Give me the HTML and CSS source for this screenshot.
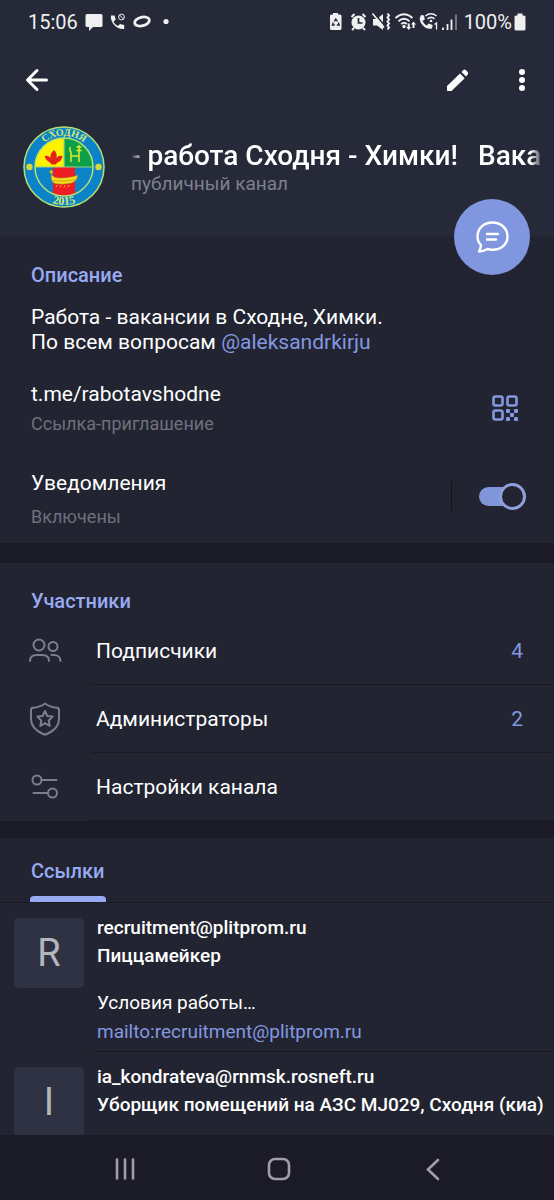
FILE: index.html
```html
<!DOCTYPE html>
<html lang="ru">
<head>
    <meta charset="UTF-8">
    <meta name="viewport" content="width=device-width, initial-scale=1.0">
    <title>Работа Сходня - Химки!</title>
    <link rel="stylesheet" href="styles.css">
</head>
<body>
    <header class="header">
        <div class="status-bar">
            <span class="status-time">15:06</span>
            <svg class="status-left" width="90" height="20" viewBox="0 0 90 20" fill="#f0f0f0">
                <path d="M2 2h14q1.500 0 1.500 1.500v10q0 1.500-1.500 1.500H8l-4 4v-4H2Q.5 15 .5 13.500v-10Q.5 2 2 2z"/>
                <path d="M26 3.500h3.500l1.200 4-2.200 2.200q1.500 3 4.300 4.400l2.200-2.200 4.200 1v4q-6 .6-10-4T26 3.500z"/>
                <circle cx="36.500" cy="5" r="2.900" fill="none" stroke="#f0f0f0" stroke-width="1"/>
                <path d="M34.500 3l4 4" stroke="#f0f0f0"/>
                <ellipse cx="57" cy="9.500" rx="7.500" ry="4.300" fill="none" stroke="#f0f0f0" stroke-width="2.800" transform="rotate(-14 57 9.500)"/>
                <circle cx="81" cy="9.500" r="2.600"/>
            </svg>
            <svg class="status-right" width="130" height="20" viewBox="0 0 130 20" fill="#f0f0f0">
                <path d="M4 2.500V1h5v1.500h2q1.500 0 1.500 1.500v12.500q0 1.500-1.500 1.500H2.500Q1 18 1 16.500V4q0-1.500 1.500-1.500z"/>
                <path d="M5.200 9.500l1.600-2.500 1.600 2.500M9.300 10.500l1 2.500H7.800M5.800 13H3.300l1-2.500" fill="none" stroke="#262938" stroke-width="1.300"/>
                <circle cx="29.500" cy="10.500" r="7"/>
                <path d="M22.500 5l3-3M36.500 5l-3-3M25 16l-2 2M34 16l2 2" stroke="#f0f0f0" stroke-width="2"/>
                <path d="M29.500 6v5h4" fill="none" stroke="#262938" stroke-width="1.700"/>
                <path d="M44 7h4l6-5v16l-6-4.500h-4z"/>
                <path d="M45 1l11 13" stroke="#262938" stroke-width="1.600"/>
                <path d="M43.500 1.500l11.500 14" stroke="#f0f0f0" stroke-width="1.600"/>
                <path d="M58.500 1.500l1.500 2-1.500 2 1.500 2-1.500 2 1.500 2-1.500 2 1.500 2-1.500 2" fill="none" stroke="#f0f0f0" stroke-width="2"/>
                <g fill="none" stroke="#f0f0f0" stroke-width="1.900">
                    <path d="M66.500 6q8.500-7.500 17 0M69.500 9.200q5.500-5 11 0M72.200 12q3-2.500 5.600 0"/>
                </g>
                <circle cx="75" cy="14.500" r="1.700"/>
                <path d="M78.700 11.500h2v3.500h1.500L79.700 18l-2.500-3h1.500zM83.500 16v-3.500H82l2.500-3 2.500 3h-1.500V16z"/>
                <path d="M92 3l3 .5.8 4-2.300 1.500q1.500 3 4.200 4.500l2-2 4 1.500-.7 3.500q-5 1.500-9.500-3.500T92 3z"/>
                <path d="M96.500 4q5.500-4.500 11 0M98.500 6.800q3.500-3 7 0" fill="none" stroke="#f0f0f0" stroke-width="1.600"/>
                <circle cx="102" cy="9" r="1.300"/>
                <path d="M105.500 12.500l2-1.500v6.500" fill="none" stroke="#f0f0f0" stroke-width="1.300"/>
                <path d="M114 15.500V18M118.500 12v6M122.500 7.500V18" stroke="#f0f0f0" stroke-width="1.800"/>
                <path d="M127 2.500V18" stroke="#7d7f8a" stroke-width="1.800"/>
            </svg>
            <span class="status-battery">100%</span>
            <svg width="12" height="18" viewBox="0 0 12 18" fill="#f0f0f0">
                <path d="M3.500 2.500V.5h5v2h1.500q1.500 0 1.500 1.500v12q0 1.500-1.500 1.500H2Q.5 17.500.5 16V4Q.5 2.500 2 2.500z"/>
            </svg>
        </div>

        <div class="toolbar">
            <button class="icon-button" aria-label="Назад">
                <svg width="24" height="24" viewBox="0 0 24 24" fill="none" stroke="#fff" stroke-width="3" stroke-linecap="round" stroke-linejoin="round">
                    <path d="M13 2.500L3.500 12l9.500 9.500M4 12h18.500"/>
                </svg>
            </button>
            <button class="icon-button edit-button" aria-label="Изменить">
                <svg width="24" height="24" viewBox="0 0 24 24" fill="#fff">
                    <path d="M1 18L14 5.500l4.700 4.700L5.500 23H1.700q-.7 0-.7-.7z"/>
                    <path d="M15.500 4l1.800-2q1.300-1 2.600.2l1.600 1.600q1.200 1.300.2 2.600L20 8.500z"/>
                </svg>
            </button>
            <button class="icon-button" aria-label="Меню">
                <svg width="8" height="24" viewBox="0 0 8 24" fill="#fff">
                    <circle cx="4" cy="4" r="3"/>
                    <circle cx="4" cy="12" r="3"/>
                    <circle cx="4" cy="20" r="3"/>
                </svg>
            </button>
        </div>

        <div class="profile">
            <svg class="avatar" viewBox="0 0 82 82">
                <defs>
                    <clipPath id="inner"><circle cx="41" cy="41" r="29"/></clipPath>
                    <path id="arcTop" d="M9.500 41a31.500 31.500 0 0 1 63 0"/>
                    <path id="arcBottom" d="M3 41a38 38 0 0 0 76 0"/>
                </defs>
                <circle cx="41" cy="41" r="40" fill="#0b83c9" stroke="#b5df72" stroke-width="1.500"/>
                <g clip-path="url(#inner)">
                    <path d="M10 10h31v31H10z" fill="#fff200"/>
                    <path d="M41 10h31v31H41z" fill="#0ca04a"/>
                    <path d="M30 41h22v31H30z" fill="#ee1c25"/>
                    <path d="M41 10v31M10 41h62" stroke="#9fd47c" stroke-width="1.200"/>
                </g>
                <circle cx="41" cy="41" r="29" fill="none" stroke="#b5df72" stroke-width="1.500"/>
                <path d="M21.500 30q3.500-1 6 2-1-4 3.500-8 3.500 3.500 2.500 8 2-3 6-2-1 5.500-5 6.500l-2 2h-4L27 36.500q-4-2-5.500-6.500z" fill="#e3231b"/>
                <path d="M47 21v4l1 1v10M48 30h8M56 36V19M53.500 21h5M53.500 24.500h5" fill="none" stroke="#e6ea2b" stroke-width="1.500"/>
                <path d="M26 45.500l3-1.500q1.500 2-.2 5 2 3 8 3t14-1.500l4-1.500q0 5-6 8-9 2-17 .5-4.500-2-3.500-10z" fill="#f6dc1b" stroke="#a5861b" stroke-width=".5"/>
                <path d="M30 54.500q11 2 22-1" fill="none" stroke="#a5861b" stroke-width=".6"/>
                <path d="M34 59l-1 2M38 59.500l-1 2M42 59.500l-1 2M46 59l-1 2" stroke="#f6dc1b" stroke-width=".8"/>
                <circle cx="6.500" cy="41" r="3.200" fill="#d8d936"/>
                <circle cx="75.500" cy="41" r="3.200" fill="#d8d936"/>
                <text class="emblem-text"><textPath href="#arcTop" startOffset="50%" text-anchor="middle">СХОДНЯ</textPath></text>
                <text class="emblem-text emblem-year"><textPath href="#arcBottom" startOffset="50%" text-anchor="middle">2015</textPath></text>
            </svg>
            <div class="profile-info">
                <h1 class="profile-title"><span>- работа Сходня - Химки!</span><span>Вакан</span></h1>
                <div class="profile-type">публичный канал</div>
            </div>
        </div>

        <button class="discuss-button" aria-label="Обсуждение">
            <svg width="34" height="34" viewBox="0 0 34 34" fill="none" stroke="#fff" stroke-width="2.400" stroke-linecap="round" stroke-linejoin="round">
                <path d="M17.500 2.500C9 2.500 2.500 8 2.500 16.500c0 4 1.500 6.500 3.500 8.500 0 2.500-1 4.500-2 6.500 3.500 0 6-1 8.500-2.500 1.500.5 3 .7 5 .7 8.500 0 15-5.200 15-13.200S26 2.500 17.500 2.500z"/>
                <path d="M12 14h11M12 19.500h9"/>
            </svg>
        </button>
    </header>

    <main class="content">
        <section class="section about">
            <h2 class="section-title">Описание</h2>
            <p class="about-text">Работа - вакансии в Сходне, Химки.<br>По всем вопросам <a href="#">@aleksandrkirju</a></p>

            <div class="info-row link-row">
                <div class="info-text">
                    <div class="info-title">t.me/rabotavshodne</div>
                    <div class="info-sub">Ссылка-приглашение</div>
                </div>
                <button class="icon-button" aria-label="QR-код">
                    <svg width="26" height="26" viewBox="0 0 26 26" fill="none" stroke="#8398e0" stroke-width="2.600">
                        <rect x="1.500" y="1.500" width="9" height="9" rx="2"/>
                        <rect x="15.500" y="1.500" width="9" height="9" rx="2"/>
                        <rect x="1.500" y="15.500" width="9" height="9" rx="2"/>
                        <g fill="#8398e0" stroke="none">
                            <rect x="14" y="14" width="4" height="4" rx="1"/>
                            <rect x="22" y="14" width="4" height="4" rx="1"/>
                            <rect x="18" y="18" width="4" height="4" rx="1"/>
                            <rect x="14" y="22" width="4" height="4" rx="1"/>
                            <rect x="22" y="22" width="4" height="4" rx="1"/>
                        </g>
                    </svg>
                </button>
            </div>

            <div class="info-row notify-row">
                <label class="info-text" for="notify">
                    <span class="info-title">Уведомления</span>
                    <span class="info-sub">Включены</span>
                </label>
                <div class="toggle-wrap">
                    <input class="toggle" type="checkbox" id="notify" checked>
                </div>
            </div>
        </section>

        <section class="section members">
            <h2 class="section-title">Участники</h2>
            <a class="menu-row" href="#">
                <svg class="menu-icon" width="34" height="34" viewBox="0 0 34 34">
                    <circle cx="11" cy="11" r="5.500"/>
                    <circle cx="25" cy="12.500" r="4.500"/>
                    <path d="M2 27c0-4 3-6 7-6h5c4 0 7 2 7 6M23.500 21h2.500c4 0 6.500 2.500 6.500 6"/>
                </svg>
                <span class="menu-body"><span>Подписчики</span><span class="menu-count">4</span></span>
            </a>
            <a class="menu-row" href="#">
                <svg class="menu-icon" width="34" height="34" viewBox="0 0 34 34">
                    <path d="M17 1.500c4 3 8 4 12 4.200q2 .3 2 2.300v9c0 8-6.500 12.500-12 15q-2 1-4 0C9.500 29.500 3 25 3 17V8q0-2 2-2.300c4-.2 8-1.200 12-4.200z"/>
                    <path d="M17 9l2.300 5 5.400.6-4 3.800 1 5.600-4.700-2.800-4.700 2.800 1-5.600-4-3.800 5.400-.6z"/>
                </svg>
                <span class="menu-body"><span>Администраторы</span><span class="menu-count">2</span></span>
            </a>
            <a class="menu-row" href="#">
                <svg class="menu-icon" width="34" height="34" viewBox="0 0 34 34">
                    <circle cx="9" cy="10" r="4.500"/>
                    <circle cx="24.500" cy="23" r="4.500"/>
                    <path d="M14 10h14.500M5.500 23H20"/>
                </svg>
                <span class="menu-body"><span>Настройки канала</span></span>
            </a>
        </section>

        <section class="section">
            <nav class="tabs">
                <a class="tab" href="#">Ссылки</a>
            </nav>
            <article class="post">
                <div class="post-letter">R</div>
                <div class="post-body">
                    <h3 class="post-title">recruitment@plitprom.ru</h3>
                    <h3 class="post-title">Пиццамейкер</h3>
                    <p class="post-text">Условия работы…</p>
                    <a class="post-link" href="#">mailto:recruitment@plitprom.ru</a>
                </div>
            </article>
            <article class="post">
                <div class="post-letter">I</div>
                <div class="post-body">
                    <h3 class="post-title">ia_kondrateva@rnmsk.rosneft.ru</h3>
                    <h3 class="post-title">Уборщик помещений на АЗС MJ029, Сходня (киа)</h3>
                </div>
            </article>
        </section>
    </main>

    <footer class="nav-bar">
        <button class="nav-button" aria-label="Недавние">
            <svg width="24" height="24" viewBox="0 0 24 24"><path d="M4 2.500v19M12 2.500v19M20 2.500v19"/></svg>
        </button>
        <button class="nav-button" aria-label="Домой">
            <svg width="24" height="24" viewBox="0 0 24 24"><rect x="2" y="2" width="20" height="20" rx="6"/></svg>
        </button>
        <button class="nav-button" aria-label="Назад">
            <svg width="24" height="24" viewBox="0 0 24 24"><path d="M17 3l-10 9.500L17 22"/></svg>
        </button>
    </footer>
</body>
</html>
```
FILE: styles.css
```css
*, *::before, *::after {
    box-sizing: border-box;
}

body {
    font-family: Roboto, "Noto Sans", sans-serif;
    background-color: #1b1b27;
    color: #fff;
    margin: 0;
    height: 100vh;
    display: flex;
    flex-direction: column;
    overflow: hidden;
}

h1, h2, h3, p {
    margin: 0;
}

a {
    text-decoration: none;
    color: #8398e0;
}

button {
    background: none;
    border: none;
    padding: 0;
    font: inherit;
    cursor: pointer;
}

svg {
    display: block;
    flex-shrink: 0;
}

/* header */
.header {
    position: relative;
    flex-shrink: 0;
    height: 236px;
    background-color: #262938;
}

.status-bar {
    height: 44px;
    padding: 0 28px;
    display: flex;
    align-items: center;
    color: #f0f0f0;
    font-size: 20px;
}

.status-left {
    margin-left: 7px;
}

.status-right {
    margin-left: auto;
}

.status-battery {
    margin: 0 2px 0 5px;
}

.toolbar {
    height: 72px;
    padding: 0 28px 0 24px;
    display: flex;
    align-items: center;
}

.edit-button {
    margin-left: auto;
    margin-right: 48px;
}

.profile {
    display: flex;
    align-items: center;
    padding: 10px 11px 0 23px;
    gap: 26px;
}

.avatar {
    width: 82px;
    height: 82px;
}

.emblem-text {
    font-family: "Liberation Serif", serif;
    font-size: 10px;
    font-weight: bold;
    fill: #d6e86a;
}

.emblem-year {
    font-size: 12px;
}

.profile-info {
    flex: 1;
    min-width: 0;
    padding-top: 2px;
}

.profile-title {
    display: flex;
    gap: 20px;
    font-size: 28px;
    line-height: 32px;
    font-weight: 500;
    white-space: nowrap;
    overflow: hidden;
    -webkit-mask-image: linear-gradient(to right, transparent, #000 12px, #000 calc(100% - 12px), transparent);
    mask-image: linear-gradient(to right, transparent, #000 12px, #000 calc(100% - 12px), transparent);
}

.profile-type {
    font-size: 19px;
    line-height: 24px;
    color: #7e808e;
}

.discuss-button {
    position: absolute;
    right: 24px;
    bottom: -39px;
    width: 76px;
    height: 76px;
    border-radius: 50%;
    background-color: #8096de;
    display: flex;
    align-items: center;
    justify-content: center;
}

/* sections */
.content {
    flex: 1;
    min-height: 0;
    overflow: hidden;
}

.section {
    background-color: #222432;
}

.section-title {
    font-size: 20px;
    line-height: 24px;
    font-weight: 500;
    color: #98aaf2;
}

.about {
    padding: 27px 28px 14px 31px;
    margin-bottom: 20px;
}

.about-text {
    margin-top: 18px;
    font-size: 21px;
    line-height: 25px;
}

.info-row {
    display: flex;
    align-items: center;
    justify-content: space-between;
}

.link-row {
    margin-top: 25px;
    padding-right: 8px;
}

.notify-row {
    margin-top: 33px;
}

.info-title {
    display: block;
    font-size: 21px;
    line-height: 28px;
}

.info-sub {
    display: block;
    margin-top: 4px;
    font-size: 18px;
    line-height: 24px;
    color: #6e707c;
}

.notify-row .info-sub {
    margin-top: 8px;
}

.toggle-wrap {
    height: 30px;
    margin-bottom: 6px;
    padding-left: 27px;
    border-left: 1px solid #12131c;
    display: flex;
    align-items: center;
}

.toggle {
    appearance: none;
    position: relative;
    width: 47px;
    height: 27px;
    margin: 0;
}

.toggle::before {
    content: "";
    position: absolute;
    top: 4px;
    left: 0;
    width: 40px;
    height: 19px;
    border-radius: 10px;
    background-color: #8096d8;
}

.toggle::after {
    content: "";
    position: absolute;
    top: 0;
    right: 0;
    width: 27px;
    height: 27px;
    border-radius: 50%;
    border: 3px solid #8f9fde;
    background-color: #222432;
}

/* members */
.members {
    padding-top: 26px;
    margin-bottom: 17px;
}

.members .section-title {
    padding-left: 31px;
    margin-bottom: 4px;
}

.menu-row {
    display: flex;
    align-items: center;
    padding-left: 28px;
    color: #fff;
}

.menu-icon {
    fill: none;
    stroke: #7c7e8d;
    stroke-width: 2;
    stroke-linecap: round;
    stroke-linejoin: round;
}

.menu-body {
    flex: 1;
    height: 68px;
    margin-left: 30px;
    padding: 0 31px 0 4px;
    border-bottom: 1px solid #191a25;
    display: flex;
    align-items: center;
    justify-content: space-between;
    font-size: 21px;
}

.menu-count {
    color: #8398e0;
}

/* links */
.tabs {
    height: 65px;
    padding: 0 30px;
    border-bottom: 1px solid #191a25;
    display: flex;
}

.tab {
    display: flex;
    flex-direction: column;
    justify-content: space-between;
    padding: 0 1px;
    font-size: 20px;
    line-height: 66px;
    font-weight: 500;
    color: #98aaf2;
}

.tab::after {
    content: "";
    height: 6px;
    margin: -8px -1px 0;
    border-radius: 4px 4px 0 0;
    background-color: #98aaf2;
}

.post {
    display: flex;
    gap: 9px;
    padding-left: 14px;
}

.post-letter {
    flex-shrink: 0;
    width: 70px;
    height: 70px;
    margin-top: 15px;
    border-radius: 5px;
    background-color: #2f3242;
    color: #b4b5bd;
    font-size: 38px;
    line-height: 70px;
    text-align: center;
}

.post-body {
    flex: 1;
    min-width: 0;
    height: 149px;
    padding: 11px 0 0 4px;
    border-bottom: 1px solid #191a25;
}

.post-title {
    font-size: 19px;
    line-height: 28px;
    font-weight: 500;
    white-space: nowrap;
}

.post-text {
    margin-top: 19px;
    font-size: 19px;
    line-height: 28px;
}

.post-link {
    display: block;
    font-size: 19px;
    line-height: 30px;
}

/* bottom navigation */
.nav-bar {
    flex-shrink: 0;
    height: 65px;
    padding: 2px 44px 0 48px;
    background-color: #1b1b27;
    display: flex;
    align-items: center;
}

.nav-button {
    flex: 1;
    height: 48px;
    display: flex;
    align-items: center;
    justify-content: center;
}

.nav-button svg {
    fill: none;
    stroke: #a09fa8;
    stroke-width: 2.6;
    stroke-linecap: round;
}
```
